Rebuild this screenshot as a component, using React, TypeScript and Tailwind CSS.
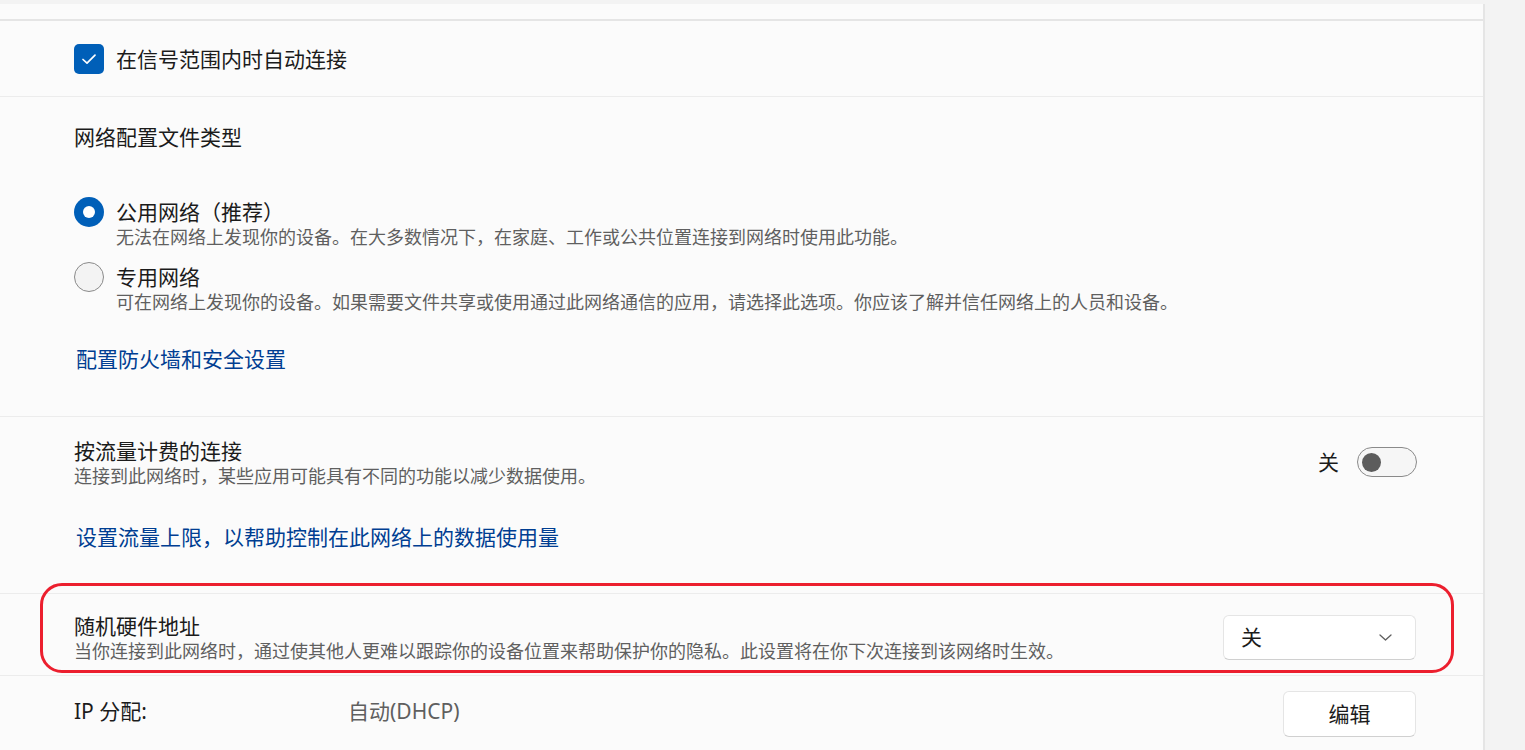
import { useState } from "react"

const font = "font-['Noto_Sans','Noto_Sans_CJK_SC',sans-serif]"

function Radio({ checked }: { checked: boolean }) {
  return checked ? (
    <span className="flex h-[30px] w-[30px] shrink-0 items-center justify-center rounded-full bg-[#005fb8]">
      <span className="h-[12px] w-[12px] rounded-full bg-white" />
    </span>
  ) : (
    <span className="h-[30px] w-[30px] shrink-0 rounded-full border-[1.5px] border-[#8a8a8a] bg-[#f3f3f3]" />
  )
}

export default function App() {
  const [profile, setProfile] = useState("public")

  const profiles = [
    {
      id: "public",
      label: "公用网络（推荐）",
      desc: "无法在网络上发现你的设备。在大多数情况下，在家庭、工作或公共位置连接到网络时使用此功能。",
    },
    {
      id: "private",
      label: "专用网络",
      desc: "可在网络上发现你的设备。如果需要文件共享或使用通过此网络通信的应用，请选择此选项。你应该了解并信任网络上的人员和设备。",
    },
  ]

  return (
    <div className={`h-[750px] overflow-hidden bg-[#f3f3f3] pt-[4px] ${font} text-[#1b1b1b]`}>
      <div className="w-[1485px] border-r-2 border-[#e5e5e5] bg-[#fbfbfb]">
        {/* tail of the previous card */}
        <div className="h-[17px] border-b-2 border-[#e5e5e5]" />

        {/* auto connect */}
        <div className="flex h-[76px] items-center gap-[12px] border-b border-[#ececec] pl-[74px]">
          <span className="flex h-[30px] w-[30px] items-center justify-center rounded-[5px] bg-[#005fb8]">
            <svg width="18" height="18" viewBox="0 0 18 18" fill="none">
              <path d="M3 9.5 L7 13.2 L15 5.2" stroke="white" strokeWidth="1.7" strokeLinecap="round" strokeLinejoin="round" />
            </svg>
          </span>
          <span className="text-[21px] leading-[28px]">在信号范围内时自动连接</span>
        </div>

        {/* network profile type */}
        <div className="border-b border-[#ececec] pb-[43px] pl-[74px] pt-[26px]">
          <div className="text-[21px] leading-[28px]">网络配置文件类型</div>
          <div className="mt-[47px] flex flex-col gap-[15px]">
            {profiles.map((p) => (
              <div key={p.id} className="cursor-pointer" onClick={() => setProfile(p.id)}>
                <div className="flex h-[28px] items-center gap-[12px]">
                  <Radio checked={profile === p.id} />
                  <span className="text-[21px] leading-[28px]">{p.label}</span>
                </div>
                <div className="pl-[42px] text-[18px] leading-[22px] text-[#5f5f5f]">{p.desc}</div>
              </div>
            ))}
          </div>
          <div className="mt-[32px] pl-[2px] text-[21px] leading-[28px] text-[#003e92]">配置防火墙和安全设置</div>
        </div>

        {/* metered connection */}
        <div className="border-b border-[#ececec] pb-[42px] pl-[74px] pr-[66px] pt-[20px]">
          <div className="flex items-center justify-between">
            <div>
              <div className="text-[21px] leading-[28px]">按流量计费的连接</div>
              <div className="text-[18px] leading-[22px] text-[#5f5f5f]">连接到此网络时，某些应用可能具有不同的功能以减少数据使用。</div>
            </div>
            <div className="flex items-center gap-[18px]">
              <span className="text-[21px] leading-[28px]">关</span>
              <span className="flex h-[30px] w-[60px] items-center rounded-full border-[1.5px] border-[#8a8a8a] bg-[#f6f6f6] pl-[4px]">
                <span className="h-[19px] w-[19px] rounded-full bg-[#5c5c5c]" />
              </span>
            </div>
          </div>
          <div className="mt-[36px] pl-[2px] text-[21px] leading-[28px] text-[#003e92]">设置流量上限，以帮助控制在此网络上的数据使用量</div>
        </div>

        {/* random hardware address */}
        <div className="relative flex justify-between border-b border-[#ececec] pb-[13px] pl-[74px] pr-[67px] pt-[18px]">
          <div>
            <div className="text-[21px] leading-[28px]">随机硬件地址</div>
            <div className="text-[18px] leading-[22px] text-[#5f5f5f]">当你连接到此网络时，通过使其他人更难以跟踪你的设备位置来帮助保护你的隐私。此设置将在你下次连接到该网络时生效。</div>
          </div>
          <div className="flex h-[45px] w-[193px] items-center justify-between self-center rounded-[6px] border border-[#e5e5e5] border-b-[#d0d0d0] bg-white pl-[17px] pr-[23px]">
            <span className="text-[21px] leading-[28px]">关</span>
            <svg width="13" height="7" viewBox="0 0 13 7" fill="none">
              <path d="M1 1 L6.5 6 L12 1" stroke="#5f5f5f" strokeWidth="1.3" strokeLinecap="round" strokeLinejoin="round" />
            </svg>
          </div>
          {/* red annotation */}
          <div className="pointer-events-none absolute left-[40px] top-[-11px] h-[90px] w-[1414px] rounded-[22px] border-[3px] border-[#ec1f2e]" />
        </div>

        {/* ip assignment */}
        <div className="flex h-[76px] items-center pl-[74px] pr-[67px]">
          <span className="mb-[6px] w-[274px] text-[21px] leading-[28px]">IP 分配:</span>
          <span className="mb-[6px] text-[21px] leading-[28px] text-[#5f5f5f]">自动(DHCP)</span>
          <button className="ml-auto h-[46px] w-[133px] rounded-[6px] border border-[#e5e5e5] border-b-[#d0d0d0] bg-white text-[21px] leading-[28px]">
            编辑
          </button>
        </div>
      </div>
    </div>
  )
}
